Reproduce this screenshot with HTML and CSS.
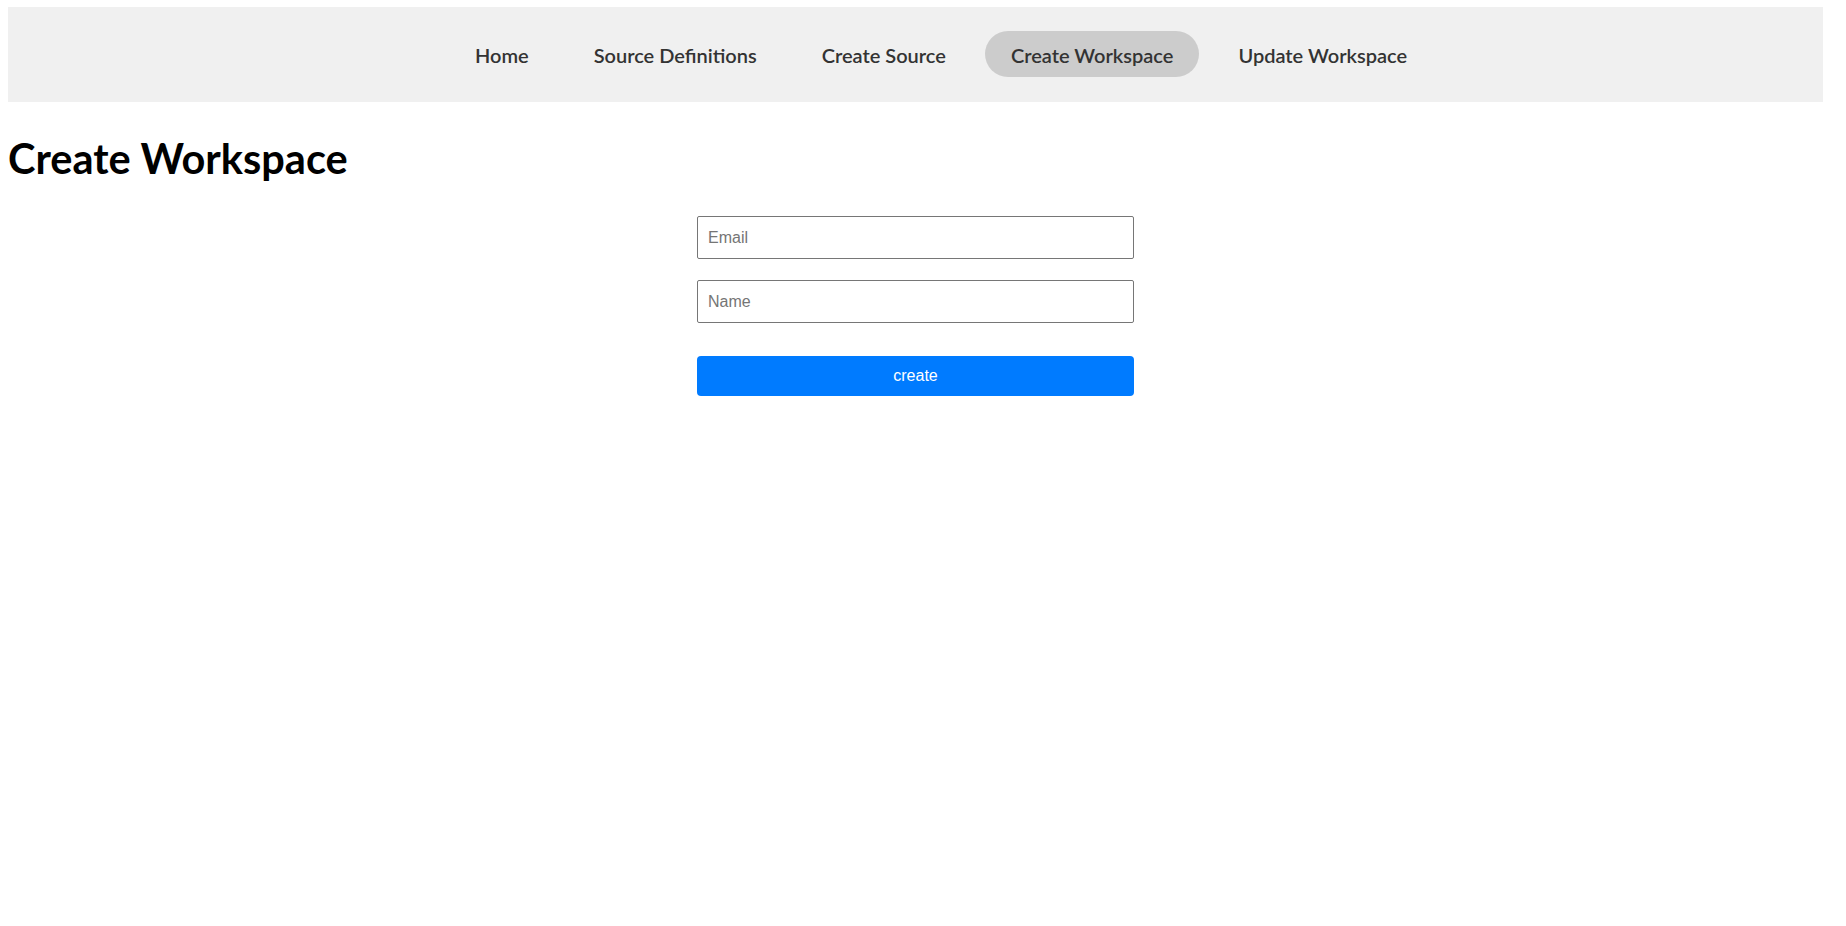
FILE: index.html
```html
<!DOCTYPE html>
<html lang="en">
<head>
<meta charset="utf-8">
<title>Create Workspace</title>
<link rel="stylesheet" href="styles.css">
</head>
<body>
<nav class="navbar">
  <ul class="nav-list">
    <li><a class="nav-link" href="#">Home</a></li>
    <li><a class="nav-link" href="#">Source Definitions</a></li>
    <li><a class="nav-link" href="#">Create Source</a></li>
    <li><a class="nav-link active" href="#">Create Workspace</a></li>
    <li><a class="nav-link" href="#">Update Workspace</a></li>
  </ul>
</nav>
<main class="page">
  <h1 class="page-title">Create Workspace</h1>
  <form class="form">
    <input class="form-input" type="email" placeholder="Email">
    <input class="form-input" type="text" placeholder="Name">
    <button class="form-button" type="button">create</button>
  </form>
</main>
</body>
</html>
```
FILE: styles.css
```css
* { box-sizing: border-box; }

html, body { background: #ffffff; }

body {
  margin: 7px 23px 8px 8px;
  font-family: "Lato", "Open Sans", sans-serif;
  color: #000;
}

.navbar {
  background: #f0f0f0;
  padding: 24px 0 25px;
}

.nav-list {
  list-style: none;
  margin: 0;
  padding: 0 0 0 51px;
  display: flex;
  justify-content: center;
  gap: 13px;
}

.nav-link {
  display: block;
  padding: 11px 26px 9px;
  line-height: 26px;
  font-size: 20px;
  font-weight: 600;
  color: #333333;
  text-decoration: none;
  border-radius: 24px;
}

.nav-link.active {
  background: #cccccc;
}

.page-title {
  margin: 32px 0 33px;
  font-size: 41.5px;
  line-height: 49px;
  font-weight: 700;
}

.form {
  width: 437px;
  margin: 0 auto;
  display: flex;
  flex-direction: column;
}

.form-input {
  height: 43px;
  padding: 0 10px;
  border: 1px solid #767676;
  border-radius: 2px;
  font-family: "Liberation Sans", Arial, sans-serif;
  font-size: 16px;
  color: #000;
  background: #fff;
  margin-bottom: 21px;
}

.form-input::placeholder {
  color: #757575;
}

.form-input + .form-input {
  margin-bottom: 33px;
}

.form-button {
  height: 40px;
  border: none;
  border-radius: 4px;
  background: #007bff;
  color: #ffffff;
  font-family: "Liberation Sans", Arial, sans-serif;
  font-size: 16px;
  cursor: pointer;
}
```
